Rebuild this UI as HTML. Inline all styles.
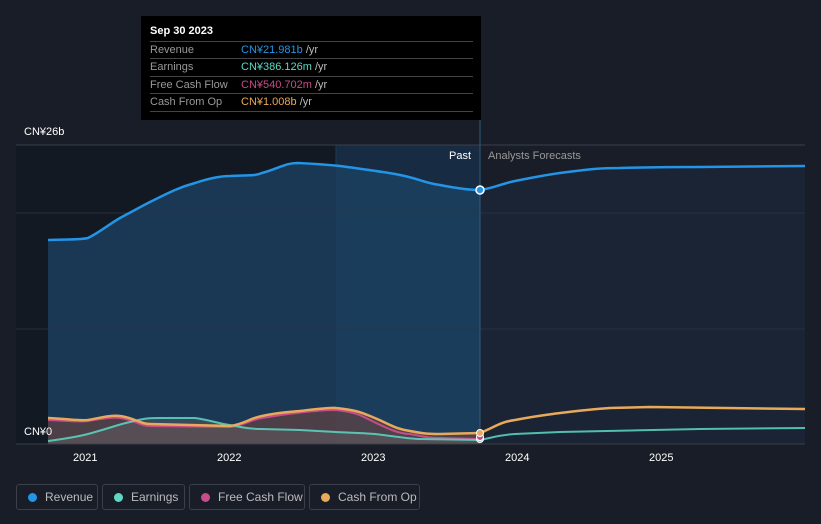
<!DOCTYPE html><html><head><meta charset="utf-8"><style>
body{margin:0;width:821px;height:524px;background:#181d27;font-family:"Liberation Sans",sans-serif;overflow:hidden;position:relative}
.tt{position:absolute;left:141px;top:16px;width:340px;height:104px;background:#000;color:#fff;font-size:11px}
.tt .h{position:absolute;left:9px;top:9px;font-weight:bold;font-size:11px}
.row{position:absolute;left:9px;width:323px;border-top:1px solid #444;height:17px;line-height:17px;color:#999}
.row span{position:absolute;left:91px}
.leg{position:absolute;top:484px;height:26px;border:1px solid #3a3f4a;border-radius:3px;color:#bbb;font-size:12px;line-height:24px;box-sizing:border-box}
.leg i{position:absolute;left:11px;top:8px;width:9px;height:9px;border-radius:50%}
.leg b{font-weight:normal;position:absolute;left:28px}
.ax{position:absolute;color:#fff;font-size:11px}
</style></head><body>
<svg width="821" height="524" style="position:absolute;left:0;top:0">
<rect x="16" y="145" width="320" height="299" fill="#131922"/>
<rect x="336" y="145" width="144" height="299" fill="#142232"/>
<path d="M480,190 C495,188 500,184 515,181 C535,177 545,175 560,173 C590,169 600,168 620,168 C660,167 680,167 700,167 L805,166 L805,444 L480,444Z" fill="#1a2434"/>
<path d="M48,240 C70,239 80,240 88,238 C100,232 108,225 120,218 C135,210 142,206 150,202 C170,192 180,187 195,183 C210,178 220,176 230,176 C250,175 255,176 262,173 C280,168 285,163 298,163 C320,164 330,165 340,166 C370,170 385,172 400,175 C420,179 425,183 440,185 C460,189 470,190 480,190 L480,444 L48,444Z" fill="#1a3854"/>
<rect x="336" y="145" width="144" height="299" fill="#1e4c74" opacity=".25"/>
<line x1="16" y1="145" x2="805" y2="145" stroke="#3a404a"/>
<line x1="16" y1="213" x2="805" y2="213" stroke="#2a3545" stroke-opacity=".8"/>
<line x1="16" y1="329" x2="805" y2="329" stroke="#2a3545" stroke-opacity=".8"/>
<line x1="336" y1="145" x2="336" y2="444" stroke="#1e3a55"/>
<line x1="480" y1="120" x2="480" y2="444" stroke="#2e5a80"/>
<path d="M48,240 C70,239 80,240 88,238 C100,232 108,225 120,218 C135,210 142,206 150,202 C170,192 180,187 195,183 C210,178 220,176 230,176 C250,175 255,176 262,173 C280,168 285,163 298,163 C320,164 330,165 340,166 C370,170 385,172 400,175 C420,179 425,183 440,185 C460,189 470,190 480,190 C495,188 500,184 515,181 C535,177 545,175 560,173 C590,169 600,168 620,168 C660,167 680,167 700,167 L805,166" fill="none" stroke="#2394e6" stroke-width="2.5"/>
<path d="M48,418 C70,419 80,421 88,420 C100,418 110,415 120,416 C135,418 140,424 150,424 L230,426 C245,424 250,418 262,416 C280,412 290,412 300,411 C320,409 330,407 336,408 C355,410 360,412 370,416 C390,424 395,429 410,431 C425,434 430,434 440,434 L480,433 L480,444 L48,444Z" fill="#8a4a3a" opacity=".45"/>
<path d="M48,441 C70,438 80,436 88,434 C110,428 120,424 130,422 C145,418 150,418 160,418 L195,418 C210,420 220,424 230,425 C245,428 252,429 262,429 L300,430 L336,432 C355,433 365,433 375,434 C400,437 410,439 420,439 L480,440 L480,444 L48,444Z" fill="#666" opacity=".4"/>
<path d="M48,420 C70,421 80,422 88,421 C100,419 110,417 120,418 C135,420 140,426 150,426 L230,427 C245,425 250,420 262,418 C290,413 320,410 336,410 C355,412 360,415 370,420 C390,430 400,434 410,434 C425,437 430,438 440,438 L480,439" fill="none" stroke="#c84b8a" stroke-width="2"/>
<path d="M48,441 C70,438 80,436 88,434 C110,428 120,424 130,422 C145,418 150,418 160,418 L195,418 C210,420 220,424 230,425 C245,428 252,429 262,429 L300,430 L336,432 C355,433 365,433 375,434 C400,437 410,439 420,439 L480,440 C495,437 500,435 515,434 L560,432 L700,429 L805,428" fill="none" stroke="#5ed8c4" stroke-width="2" opacity=".85"/>
<path d="M48,418 C70,419 80,421 88,420 C100,418 110,415 120,416 C135,418 140,424 150,424 L230,426 C245,424 250,418 262,416 C280,412 290,412 300,411 C320,409 330,407 336,408 C355,410 360,412 370,416 C390,424 395,429 410,431 C425,434 430,434 440,434 L480,433 C495,427 500,422 515,420 C535,416 545,415 560,413 C585,410 595,409 610,408 L650,407 L805,409" fill="none" stroke="#e8a95a" stroke-width="2.5"/>
<line x1="16" y1="444" x2="805" y2="444" stroke="#3a404a"/>
<circle cx="480" cy="190" r="4" fill="#2394e6" stroke="#fff" stroke-width="1.5"/>
<circle cx="480" cy="439" r="3.5" fill="#5ed8c4" stroke="#fff" stroke-width="1"/>
<circle cx="480" cy="437" r="3.5" fill="#c84b8a" stroke="#fff" stroke-width="1"/>
<circle cx="480" cy="433" r="3.5" fill="#e8a95a" stroke="#fff" stroke-width="1"/>
</svg>
<div class="ax" style="left:24px;top:126px">CN¥26b</div>
<div class="ax" style="left:24px;top:426px">CN¥0</div>
<div class="ax" style="left:449px;top:150px">Past</div>
<div class="ax" style="left:488px;top:150px;color:#999">Analysts Forecasts</div>
<div class="ax" style="left:73px;top:452px">2021</div>
<div class="ax" style="left:217px;top:452px">2022</div>
<div class="ax" style="left:361px;top:452px">2023</div>
<div class="ax" style="left:505px;top:452px">2024</div>
<div class="ax" style="left:649px;top:452px">2025</div>
<div class="tt"><div class="h">Sep 30 2023</div>
<div class="row" style="top:25px">Revenue<span style="color:#2394e6">CN¥21.981b <em style="font-style:normal;color:#bbb">/yr</em></span></div>
<div class="row" style="top:42px">Earnings<span style="color:#5ed8c4">CN¥386.126m <em style="font-style:normal;color:#bbb">/yr</em></span></div>
<div class="row" style="top:60px">Free Cash Flow<span style="color:#c84b8a">CN¥540.702m <em style="font-style:normal;color:#bbb">/yr</em></span></div>
<div class="row" style="top:77px;border-bottom:1px solid #444">Cash From Op<span style="color:#e8a95a">CN¥1.008b <em style="font-style:normal;color:#bbb">/yr</em></span></div>
</div>
<div class="leg" style="left:16px;width:82px"><i style="background:#2394e6"></i><b>Revenue</b></div>
<div class="leg" style="left:102px;width:83px"><i style="background:#5ed8c4"></i><b>Earnings</b></div>
<div class="leg" style="left:189px;width:116px"><i style="background:#c84b8a"></i><b>Free Cash Flow</b></div>
<div class="leg" style="left:309px;width:111px"><i style="background:#e8a95a"></i><b>Cash From Op</b></div>
</body></html>
